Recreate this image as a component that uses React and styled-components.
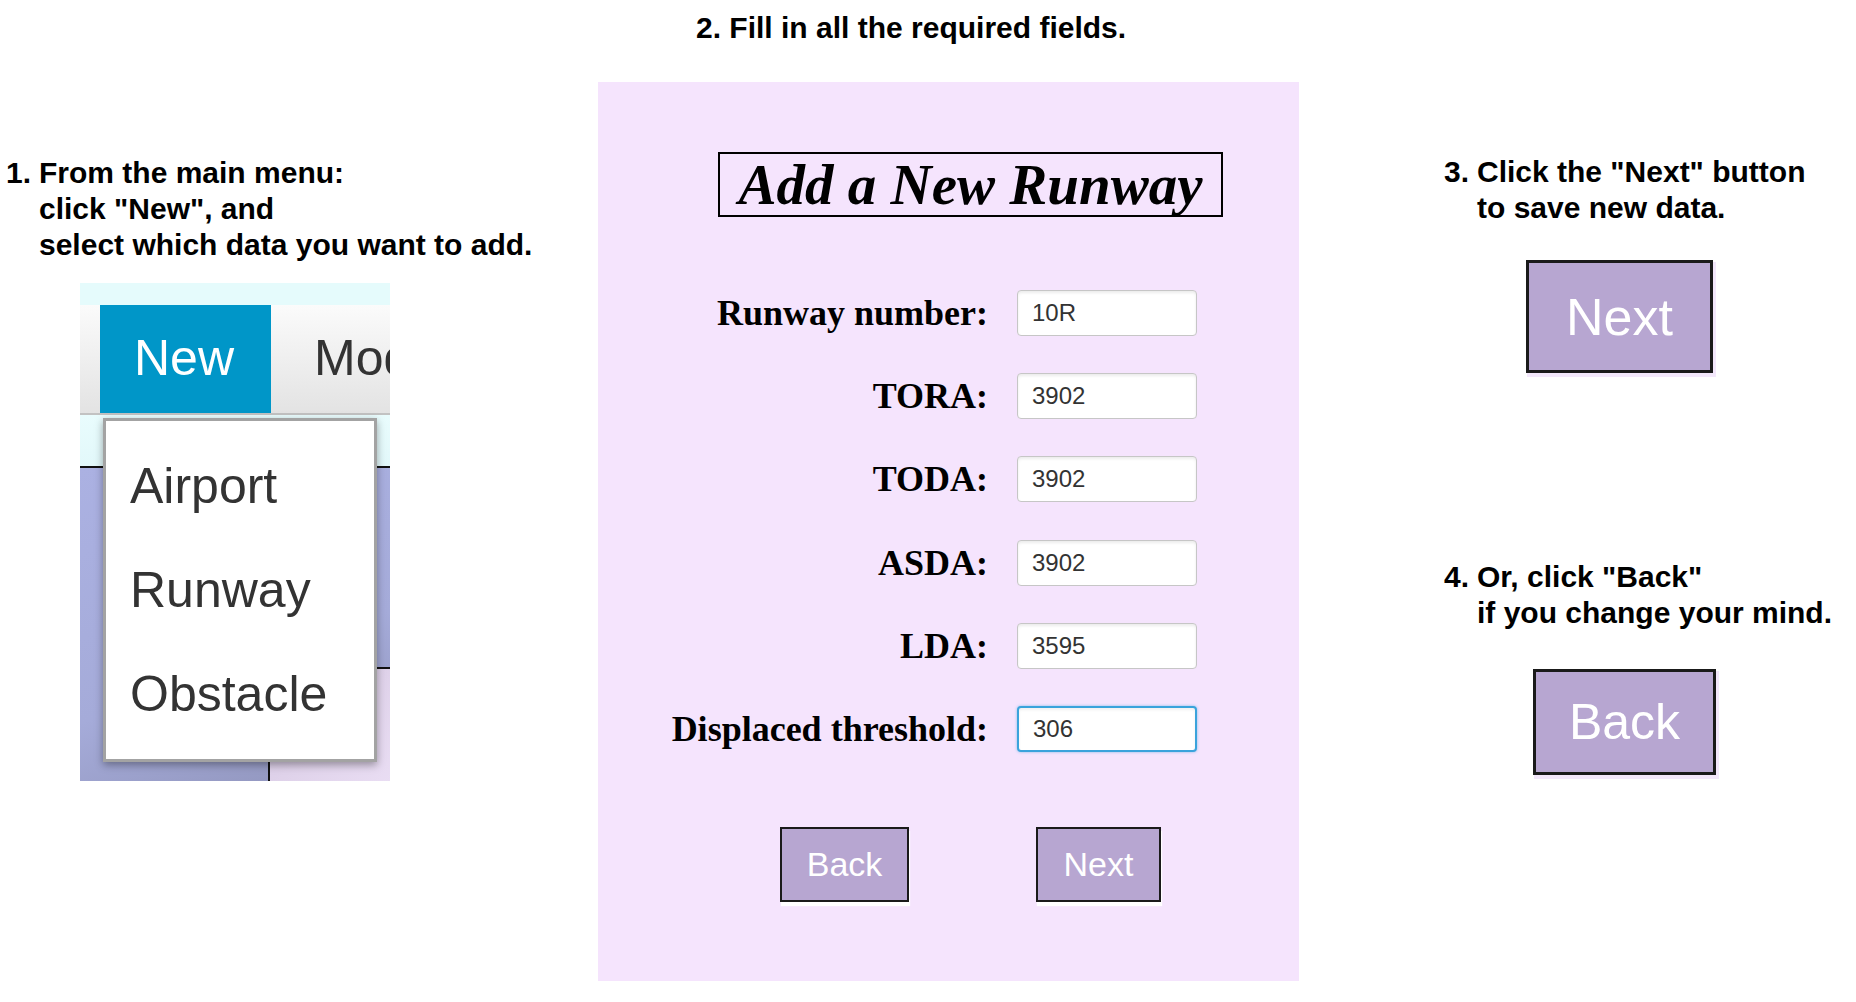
import React from 'react';
import styled, { createGlobalStyle } from 'styled-components';

const GlobalStyle = createGlobalStyle`
  html, body { margin: 0; padding: 0; background: #ffffff; }
  body { width: 1856px; height: 1002px; overflow: hidden; font-family: "Liberation Sans", Arial, sans-serif; }
  * { box-sizing: border-box; }
`;

const Page = styled.div`
  display: flex;
  align-items: flex-start;
  width: 1856px;
  height: 1002px;
  padding-left: 6px;
`;

const LeftCol = styled.div`
  width: 592px;
  flex: none;
  padding-top: 155px;
  display: flex;
  flex-direction: column;
  align-items: flex-start;
`;

const CenterCol = styled.div`
  width: 701px;
  flex: none;
  padding-top: 10px;
  display: flex;
  flex-direction: column;
  align-items: flex-start;
`;

const RightCol = styled.div`
  margin-left: 145px;
  padding-top: 154px;
  display: flex;
  flex-direction: column;
  align-items: flex-start;
`;

const Step = styled.div`
  display: flex;
  margin-top: ${(p) => p.$mt || 0}px;
  font: bold 30px/36px "Liberation Sans", Arial, sans-serif;
  color: #000;
  white-space: nowrap;
`;

const StepNum = styled.span`
  width: 33px;
  flex: none;
`;

const StepLines = styled.div`
  display: flex;
  flex-direction: column;
`;

const Title = styled.h2`
  margin: 0 0 0 98px;
  font: bold 30px/36px "Liberation Sans", Arial, sans-serif;
  color: #000;
  white-space: nowrap;
`;

/* ---------- menu screenshot ---------- */
const MenuShot = styled.div`
  position: relative;
  margin: 20px 0 0 74px;
  width: 310px;
  height: 498px;
  display: flex;
  flex-direction: column;
  overflow: hidden;
`;

const CyanStrip = styled.div`
  height: 22px;
  background: #e5fbfc;
`;

const MenuBar = styled.div`
  height: 110px;
  display: flex;
  align-items: stretch;
  padding-left: 20px;
  background: linear-gradient(#fbfbfb, #e3e3e3);
  border-bottom: 2px solid #c2c2c2;
  overflow: hidden;
`;

const MenuItem = styled.div`
  flex: none;
  display: flex;
  align-items: center;
  width: ${(p) => (p.$active ? '171px' : 'auto')};
  padding-left: ${(p) => (p.$active ? '34px' : '43px')};
  padding-bottom: 2px;
  background: ${(p) => (p.$active ? '#0096c8' : 'transparent')};
  color: ${(p) => (p.$active ? '#ffffff' : '#333333')};
  font: 50px/1 "Liberation Sans", Arial, sans-serif;
  white-space: nowrap;
`;

const CyanArea = styled.div`
  height: 51px;
  background: linear-gradient(#e9fcfd, #e2f8fa);
`;

const BlackRule = styled.div`
  height: 2px;
  background: #111;
`;

const LowerArea = styled.div`
  flex: 1;
  display: flex;
  justify-content: flex-end;
  align-items: flex-end;
  background: linear-gradient(160deg, #abb1e2 0%, #a5abd9 60%, #8f93ba 100%);
`;

const LavenderBox = styled.div`
  width: 122px;
  height: 114px;
  border-top: 2px solid #111;
  border-left: 2px solid #111;
  background: linear-gradient(135deg, #d4c6e0, #e9ddf3);
`;

const Dropdown = styled.div`
  position: absolute;
  left: 23px;
  top: 135px;
  width: 274px;
  height: 344px;
  padding: 13px 0 0 24px;
  background: #ffffff;
  border: 3px solid #a3a3a3;
  box-shadow: 0 3px 8px rgba(0, 0, 0, 0.35);
`;

const DropItem = styled.div`
  height: 104px;
  line-height: 104px;
  font-size: 50px;
  font-family: "Liberation Sans", Arial, sans-serif;
  color: #333333;
`;

/* ---------- form panel ---------- */
const Panel = styled.div`
  margin-top: 36px;
  width: 701px;
  height: 899px;
  background: #f5e4fd;
  padding-top: 70px;
  display: flex;
  flex-direction: column;
  align-items: flex-start;
`;

const HeadingBox = styled.h1`
  margin: 0 0 0 120px;
  width: 505px;
  height: 65px;
  display: flex;
  align-items: center;
  justify-content: center;
  border: 2px solid #000;
  font: italic bold 57px/1 "Liberation Serif", "Times New Roman", serif;
  color: #000;
  white-space: nowrap;
`;

const Form = styled.div`
  margin-top: 73px;
  display: grid;
  grid-template-columns: 390px 180px;
  grid-auto-rows: 46px;
  column-gap: 29px;
  row-gap: 37.2px;
  align-items: center;
`;

const Label = styled.label`
  text-align: right;
  font: bold 36px/1 "Liberation Serif", "Times New Roman", serif;
  color: #000;
  white-space: nowrap;
`;

const Field = styled.input`
  width: 180px;
  height: 46px;
  padding: 0 14px;
  border: ${(p) => (p.$focused ? '2px solid #3aa3dc' : '1px solid #c6c6c6')};
  border-radius: 4px;
  background: #fff;
  box-shadow: ${(p) =>
    p.$focused
      ? '0 0 3px rgba(58, 163, 220, 0.6), inset 0 2px 3px rgba(0,0,0,0.06)'
      : 'inset 0 2px 3px rgba(0, 0, 0, 0.08)'};
  font: 24px "Liberation Sans", Arial, sans-serif;
  color: #333;
  outline: none;
`;

const ButtonRow = styled.div`
  margin-top: 75px;
  padding-left: 182px;
  display: flex;
  gap: 127px;
`;

const PurpleButton = styled.button`
  width: ${(p) => p.$w}px;
  height: ${(p) => p.$h}px;
  margin: ${(p) => p.$margin || 0};
  padding: 0;
  display: flex;
  align-items: center;
  justify-content: center;
  background: #b7a6d1;
  border: ${(p) => p.$bw || 2}px solid #1a1a1a;
  color: #ffffff;
  font: ${(p) => p.$fs}px/1 "Liberation Sans", Arial, sans-serif;
  box-shadow: ${(p) => (p.$halo ? '2px 3px 0 1px #f3e7fb' : '1px 4px 1px rgba(255,255,255,0.95)')};
  cursor: pointer;
`;

const fields = [
  ['Runway number:', '10R'],
  ['TORA:', '3902'],
  ['TODA:', '3902'],
  ['ASDA:', '3902'],
  ['LDA:', '3595'],
  ['Displaced threshold:', '306'],
];

export default function App() {
  return (
    <>
      <GlobalStyle />
      <Page>
        <LeftCol>
          <Step>
            <StepNum>1.</StepNum>
            <StepLines>
              <span>From the main menu:</span>
              <span>click "New", and</span>
              <span>select which data you want to add.</span>
            </StepLines>
          </Step>
          <MenuShot>
            <CyanStrip />
            <MenuBar>
              <MenuItem $active>New</MenuItem>
              <MenuItem>Mod</MenuItem>
            </MenuBar>
            <CyanArea />
            <BlackRule />
            <LowerArea>
              <LavenderBox />
            </LowerArea>
            <Dropdown>
              <DropItem>Airport</DropItem>
              <DropItem>Runway</DropItem>
              <DropItem>Obstacle</DropItem>
            </Dropdown>
          </MenuShot>
        </LeftCol>

        <CenterCol>
          <Title>2. Fill in all the required fields.</Title>
          <Panel>
            <HeadingBox>Add a New Runway</HeadingBox>
            <Form>
              {fields.map(([label, value], i) => (
                <React.Fragment key={label}>
                  <Label>{label}</Label>
                  <Field defaultValue={value} $focused={i === fields.length - 1} />
                </React.Fragment>
              ))}
            </Form>
            <ButtonRow>
              <PurpleButton $w={129} $h={75} $fs={34}>Back</PurpleButton>
              <PurpleButton $w={125} $h={75} $fs={34}>Next</PurpleButton>
            </ButtonRow>
          </Panel>
        </CenterCol>

        <RightCol>
          <Step>
            <StepNum>3.</StepNum>
            <StepLines>
              <span>Click the "Next" button</span>
              <span>to save new data.</span>
            </StepLines>
          </Step>
          <PurpleButton $w={187} $h={113} $fs={52} $bw={3} $halo $margin="34px 0 0 82px">
            Next
          </PurpleButton>
          <Step $mt={186}>
            <StepNum>4.</StepNum>
            <StepLines>
              <span>Or, click "Back"</span>
              <span>if you change your mind.</span>
            </StepLines>
          </Step>
          <PurpleButton $w={183} $h={106} $fs={50} $bw={3} $halo $margin="38px 0 0 89px">
            Back
          </PurpleButton>
        </RightCol>
      </Page>
    </>
  );
}
